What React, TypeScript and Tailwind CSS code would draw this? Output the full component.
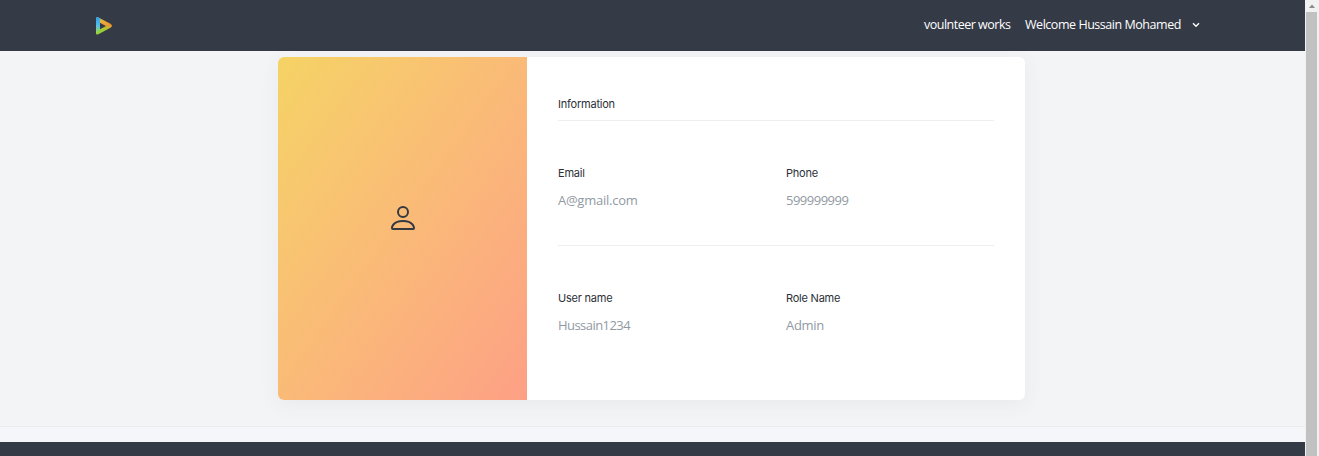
import { BsPerson } from "react-icons/bs";

function Logo() {
  return (
    <svg viewBox="0 0 18 20" className="h-5 w-[18px]">
      <defs>
        <linearGradient id="left" x1="0" y1="0" x2="0" y2="1">
          <stop offset="0" stopColor="#2f9fe8" />
          <stop offset="0.5" stopColor="#55bde8" />
          <stop offset="1" stopColor="#a4dc3c" />
        </linearGradient>
        <linearGradient id="top" x1="0" y1="0" x2="1" y2="1">
          <stop offset="0" stopColor="#4bb4e8" />
          <stop offset="0.35" stopColor="#e8b53c" />
          <stop offset="1" stopColor="#f08a2c" />
        </linearGradient>
        <linearGradient id="bottom" x1="0" y1="1" x2="1" y2="0">
          <stop offset="0" stopColor="#8ccf34" />
          <stop offset="0.5" stopColor="#9fcf34" />
          <stop offset="1" stopColor="#f0a030" />
        </linearGradient>
      </defs>
      <path d="M1 2.6Q1 .3 3 1.3L15.4 7.8Q17.4 9 16.5 10.5L11.2 10.2L5 6.8Z" fill="url(#top)" />
      <path d="M1 16.5L5 13.2L11.2 9.9L16.9 9.4Q17 10.8 15.4 11.8L3.4 18.2Q1 19.2 1 17Z" fill="url(#bottom)" />
      <path d="M1 2.8Q1 .6 3 1.3Q5 2.4 5 4.5V13.2L1.6 17.8Q1 17.6 1 17Z" fill="url(#left)" />
    </svg>
  );
}

function Field({ label, value, tracking }: { label: string; value: string; tracking: string }) {
  return (
    <div className="w-[228px] shrink-0">
      <h6 className="font-['Inter',sans-serif] text-[11px] leading-4 tracking-[-0.22px] text-[#2b3038]">{label}</h6>
      <p className={`mt-[9px] font-['Open_Sans',sans-serif] text-[13px] leading-5 text-[#919aa3] ${tracking}`}>{value}</p>
    </div>
  );
}

export default function App() {
  return (
    <div className="flex h-[456px] w-full overflow-hidden bg-[#f3f4f6]">
      <div className="flex min-w-0 flex-1 flex-col">
        <header className="flex h-[51px] shrink-0 items-center bg-[#343a46] pl-[95px] pr-[105px]">
          <Logo />
          <nav className="ml-auto flex items-center pb-0.5 font-['Open_Sans',sans-serif] text-[12.5px] leading-5 text-white">
            <a className="w-[101px] tracking-[-0.5px] whitespace-nowrap">voulnteer works</a>
            <a className="w-[167px] tracking-[-0.46px] whitespace-nowrap">Welcome Hussain Mohamed</a>
            <svg viewBox="0 0 8 6" className="h-1.5 w-2" fill="none" stroke="white" strokeWidth="1.4">
              <path d="M1 1.2L4 4.2L7 1.2" />
            </svg>
          </nav>
        </header>
        <main className="flex h-[375px] shrink-0 justify-center pt-1.5 pr-[2px]">
          <section className="flex h-[343px] w-[747px] overflow-hidden rounded-[6px] bg-white shadow-[0_5px_20px_0_rgba(69,90,100,0.06)]">
            <div className="flex w-[249px] shrink-0 items-center justify-center bg-linear-to-br from-[#f5d365] to-[#fda085] pb-[21px]">
              <BsPerson className="size-8 text-[#343a40]" />
            </div>
            <div className="min-w-0 flex-1 px-[31px] pt-[39px]">
              <h6 className="border-b border-[#eceef0] pb-2 font-['Inter',sans-serif] text-[11px] leading-4 tracking-[-0.22px] text-[#2b3038]">Information</h6>
              <div className="mt-11 flex">
                <Field label="Email" value="A@gmail.com" tracking="tracking-[-0.25px]" />
                <Field label="Phone" value="599999999" tracking="tracking-[-0.5px]" />
              </div>
              <hr className="mt-[35px] border-[#eceef0]" />
              <div className="mt-11 flex">
                <Field label="User name" value="Hussain1234" tracking="tracking-[-0.55px]" />
                <Field label="Role Name" value="Admin" tracking="tracking-[-0.3px]" />
              </div>
            </div>
          </section>
        </main>
        <div className="h-4 shrink-0 border-t border-[#e9ebed] bg-[#f4f6f9]" />
        <footer className="flex-1 bg-[#343a46]" />
      </div>
      <aside className="flex w-[14px] shrink-0 flex-col items-center bg-[#f1f1f1] pr-px">
        <svg viewBox="0 0 8 12" className="h-3 w-2 shrink-0">
          <path d="M1 8L4 4.5L7 8Z" fill="#8b8b8b" />
        </svg>
        <div className="w-[11px] flex-1 bg-[#c1c1c1]" />
      </aside>
    </div>
  );
}
